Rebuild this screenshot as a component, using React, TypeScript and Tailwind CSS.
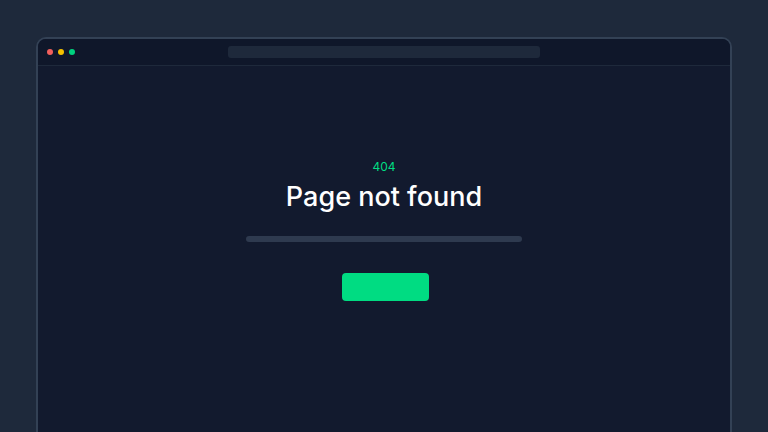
export default function App() {
  return (
    <div className="w-[768px] h-[432px] overflow-hidden bg-[#1e293b] px-[36px] pt-[37px] font-['Inter',sans-serif]">
      <div className="h-[420px] rounded-t-[10px] border-2 border-[#334155] bg-[#121a2e] overflow-hidden">
        {/* title bar */}
        <div className="grid h-[27px] grid-cols-[1fr_312px_1fr] items-center border-b border-[#1e293b] bg-[#0f172a]">
          <div className="flex items-center gap-[5px] pl-[9px]">
            <span className="h-[6px] w-[6px] rounded-full bg-[#f25f5c]" />
            <span className="h-[6px] w-[6px] rounded-full bg-[#f5c000]" />
            <span className="h-[6px] w-[6px] rounded-full bg-[#00d27f]" />
          </div>
          <div className="h-[12px] rounded-[3px] bg-[#1e293b]" />
          <div />
        </div>

        {/* body */}
        <div className="flex flex-col items-center pt-[93px]">
          <div className="text-[12px] leading-[16px] text-[#00dc82]">404</div>
          <h1 className="mt-[4px] text-[27px] leading-[36px] font-medium text-white">Page not found</h1>
          <div className="mt-[21px] h-[6px] w-[276px] rounded-full bg-[#2e3a4f]" />
          <button className="mt-[31px] ml-[3px] h-[28px] w-[87px] rounded-[4px] bg-[#00dc82]" />
        </div>
      </div>
    </div>
  );
}
